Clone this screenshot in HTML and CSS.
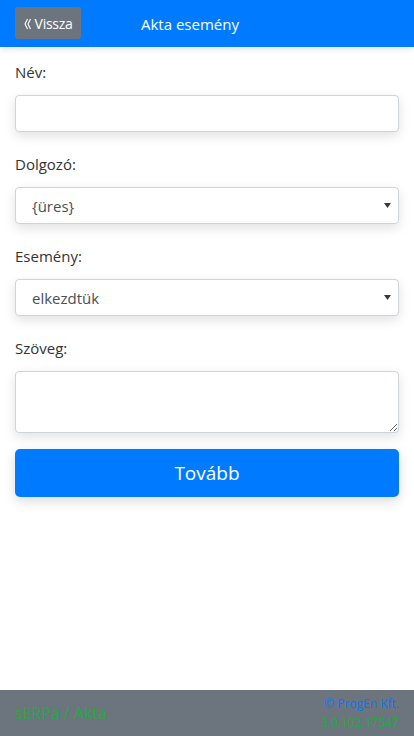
FILE: index.html
```html
<!DOCTYPE html>
<html lang="hu">
<head>
<meta charset="utf-8">
<link rel="stylesheet" href="styles.css">
</head>
<body>
<div class="page">
  <header class="topbar">
    <button class="back"><svg class="chev" width="7" height="12" viewBox="0 0 7 12"><path d="M3.5 1 L1 6 L3.5 11 M6.5 1 L4 6 L6.5 11" fill="none" stroke="#fff" stroke-width="1.1"/></svg>Vissza</button>
    <div class="title">Akta esemény</div>
  </header>
  <main class="form">
    <div class="group">
      <label class="lbl">Név:</label>
      <input class="ctl" type="text">
    </div>
    <div class="group">
      <label class="lbl">Dolgozó:</label>
      <select class="ctl sel"><option>{üres}</option></select>
    </div>
    <div class="group">
      <label class="lbl">Esemény:</label>
      <select class="ctl sel"><option>elkezdtük</option></select>
    </div>
    <div class="group">
      <label class="lbl">Szöveg:</label>
      <textarea class="ctl area"></textarea>
    </div>
    <button class="next">Tovább</button>
  </main>
  <footer class="foot">
    <div class="app">sERPa / Akta</div>
    <div class="meta">
      <div class="copy">© ProgEn Kft.</div>
      <div class="ver">3.0.102.17547</div>
    </div>
  </footer>
</div>
</body>
</html>
```
FILE: styles.css
```css
* { box-sizing: border-box; }
html, body { margin: 0; padding: 0; }
body {
  font-family: "Open Sans", "Noto Sans", sans-serif;
  color: #212529;
  background: #fff;
}
.page {
  height: 736px;
  display: flex;
  flex-direction: column;
}
.topbar {
  height: 47px;
  background: #007bff;
  display: flex;
  align-items: center;
  padding: 0 15px;
  box-shadow: 0 2px 6px rgba(0,0,0,0.12);
}
.back {
  height: 32px;
  width: 66px;
  margin-top: -1px;
  background: #6c757d;
  color: #fff;
  border: none;
  border-radius: 3px;
  font-family: inherit;
  font-size: 14px;
  padding: 0;
  letter-spacing: -0.3px;
  display: flex;
  align-items: center;
  justify-content: center;
}
.chev {
  margin-right: 4px;
  margin-top: 1px;
}
.title {
  color: #fff;
  font-size: 15px;
  margin-left: 60px;
}
.form {
  flex: 1;
  padding: 15px 15px 0;
  display: flex;
  flex-direction: column;
}
.group {
  display: flex;
  flex-direction: column;
  margin-bottom: 22px;
}
.group:last-of-type { margin-bottom: 16px; }
.lbl {
  font-size: 15px;
  line-height: 20px;
  color: #333;
  margin-bottom: 13px;
}
.ctl {
  height: 37px;
  border: 1px solid #ced4da;
  border-radius: 4px;
  background: #fff;
  box-shadow: 0 4px 12px rgba(0,0,0,0.12);
  font-family: inherit;
  font-size: 15px;
  color: #495057;
  width: 100%;
  padding: 0 16px;
}
.sel {
  appearance: none;
  -webkit-appearance: none;
  background-image: url("data:image/svg+xml;utf8,<svg xmlns='http://www.w3.org/2000/svg' width='8' height='6'><path d='M0 0H8L4 6Z' fill='%23343a40'/></svg>");
  background-repeat: no-repeat;
  background-position: right 7px center;
  background-size: 7px 5px;
}
.area {
  height: 62px;
  resize: vertical;
  padding: 6px 8px;
}
.next {
  height: 48px;
  background: #007bff;
  color: #fff;
  border: none;
  border-radius: 5px;
  font-family: inherit;
  font-size: 19px;
  box-shadow: 0 4px 12px rgba(0,0,0,0.15);
}
.foot {
  height: 46px;
  background: #6c757d;
  display: flex;
  align-items: center;
  justify-content: space-between;
  padding: 0 15px;
}
.app {
  color: #28a745;
  font-size: 16px;
}
.meta {
  text-align: right;
  font-size: 12px;
  line-height: 19px;
}
.copy { color: #007bff; }
.ver { color: #28a745; }
```
